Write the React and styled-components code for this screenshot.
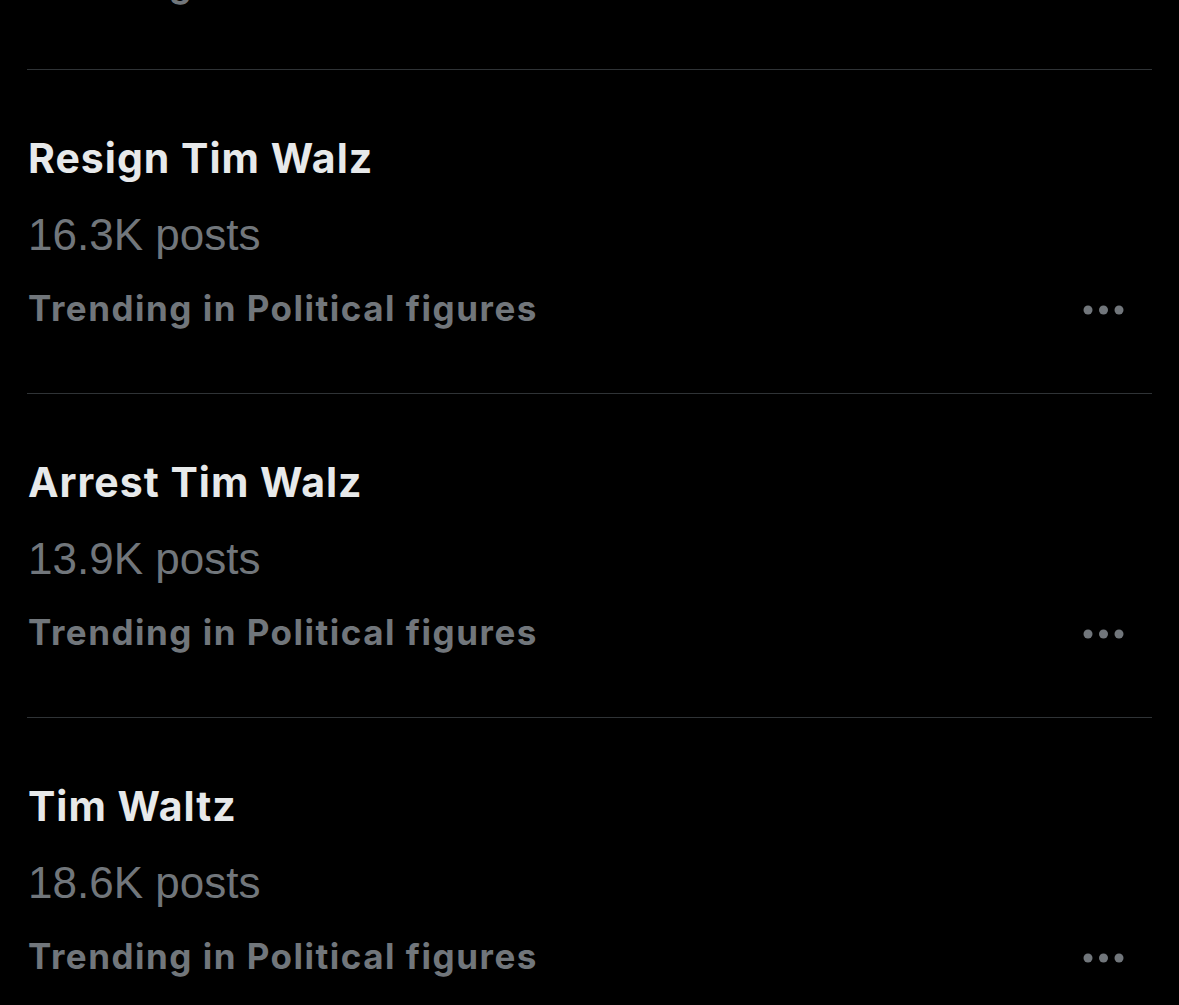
import React from 'react';
import styled, { createGlobalStyle } from 'styled-components';

const GlobalStyle = createGlobalStyle`
  html, body {
    margin: 0;
    padding: 0;
    background: #000;
  }
  body {
    overflow: hidden;
  }
`;

const Page = styled.main`
  width: 1179px;
  height: 1005px;
  overflow: hidden;
  background: #000;
`;

// list is scrolled: the first item sits mostly above the top edge
const List = styled.ul`
  list-style: none;
  margin: -254px 27px 0 27px;
  padding: 0;
`;

const Item = styled.li`
  padding: 64px 0 65px 1px;
  & + & {
    border-top: 1px solid #2f3336;
  }
`;

const Title = styled.h3`
  margin: 0;
  font-family: Inter, 'Noto Sans', sans-serif;
  font-weight: 700;
  font-size: 41px;
  line-height: 48px;
  letter-spacing: 1px;
  color: #e7e9ea;
  font-variant-ligatures: none;
`;

const Posts = styled.div`
  margin-top: 27px;
  font-family: 'Liberation Sans', Arial, sans-serif;
  font-size: 44px;
  line-height: 52px;
  color: #71767b;
`;

const Footer = styled.div`
  margin-top: 27px;
  display: flex;
  align-items: center;
  justify-content: space-between;
`;

const Category = styled.span`
  font-family: Inter, 'Noto Sans', sans-serif;
  font-weight: 700;
  font-size: 35px;
  line-height: 40px;
  letter-spacing: 1.5px;
  color: #71767b;
  font-variant-ligatures: none;
`;

const MoreButton = styled.button`
  display: flex;
  align-items: center;
  background: none;
  border: 0;
  padding: 0;
  margin: 4px 27px 0 0;
  color: #71767b;
`;

const DotsIcon = () => (
  <svg width="42" height="10" viewBox="0 0 42 10" fill="currentColor">
    <circle cx="5" cy="5" r="4.5" />
    <circle cx="20.5" cy="5" r="4.5" />
    <circle cx="36" cy="5" r="4.5" />
  </svg>
);

const trends = [
  { title: 'Tim Walz', posts: '21.4K posts', category: 'Trending in United States' },
  { title: 'Resign Tim Walz', posts: '16.3K posts', category: 'Trending in Political figures' },
  { title: 'Arrest Tim Walz', posts: '13.9K posts', category: 'Trending in Political figures' },
  { title: 'Tim Waltz', posts: '18.6K posts', category: 'Trending in Political figures' },
];

const App = () => {
  return (
    <Page>
      <GlobalStyle />
      <List>
        {trends.map((item, i) => (
          <Item key={i}>
            <Title>{item.title}</Title>
            <Posts>{item.posts}</Posts>
            <Footer>
              <Category>{item.category}</Category>
              <MoreButton aria-label="More">
                <DotsIcon />
              </MoreButton>
            </Footer>
          </Item>
        ))}
      </List>
    </Page>
  );
};

export default App;
